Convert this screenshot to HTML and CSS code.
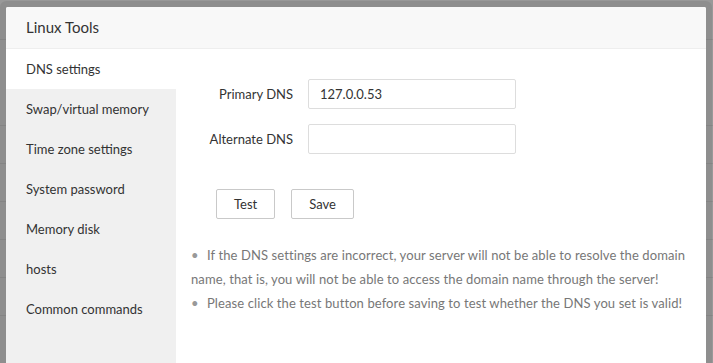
FILE: index.html
```html
<!DOCTYPE html>
<html lang="en">
<head>
    <meta charset="UTF-8">
    <title>Linux Tools</title>
    <link rel="stylesheet" href="styles.css">
</head>
<body>
    <!-- page behind the dimmed overlay -->
    <div class="page">
        <div class="page-row row-head"></div>
        <div class="page-row row-tall"></div>
        <div class="page-row"></div>
        <div class="page-row"></div>
        <div class="page-row"></div>
        <div class="page-row"></div>
        <div class="page-row"></div>
    </div>

    <!-- Modal -->
    <div class="layer">
        <div class="layer-title">Linux Tools</div>
        <div class="layer-body">
            <ul class="tabs">
                <li class="tab active">DNS settings</li>
                <li class="tab">Swap/virtual memory</li>
                <li class="tab">Time zone settings</li>
                <li class="tab">System password</li>
                <li class="tab">Memory disk</li>
                <li class="tab">hosts</li>
                <li class="tab">Common commands</li>
            </ul>
            <div class="tab-content">
                <div class="form-item">
                    <label class="form-label" for="dns1">Primary DNS</label>
                    <input class="form-input" type="text" id="dns1" value="127.0.0.53">
                </div>
                <div class="form-item">
                    <label class="form-label" for="dns2">Alternate DNS</label>
                    <input class="form-input" type="text" id="dns2">
                </div>
                <div class="form-buttons">
                    <button class="btn">Test</button>
                    <button class="btn">Save</button>
                </div>
                <ul class="help">
                    <li>If the DNS settings are incorrect, your server will not be able to resolve the domain name, that is, you will not be able to access the domain name through the server!</li>
                    <li>Please click the test button before saving to test whether the DNS you set is valid!</li>
                </ul>
            </div>
        </div>
    </div>
</body>
</html>
```

FILE: styles.css
```css
body {
    margin: 0;
    height: 363px;
    overflow: hidden;
    background-color: #999;
    font-family: Lato, "Liberation Sans", sans-serif;
    font-size: 13px;
    color: #333;
}
/* Background page */
.page-row {
    height: 37px;
    border-bottom: 1px solid #8e8e8e;
}
.row-head {
    height: 39px;
}
.row-tall {
    height: 85px;
}
/* Modal layer */
.layer {
    position: absolute;
    left: 6px;
    top: 7px;
    width: 700px;
    height: 362px;
    background-color: #fff;
    border-radius: 2px;
    box-shadow: 0 0 0 6px rgba(0, 0, 0, 0.07);
    display: flex;
    flex-direction: column;
}
.layer-title {
    height: 41px;
    line-height: 41px;
    padding: 0 20px;
    font-size: 15px;
    color: #333;
    background-color: #f8f8f8;
    border-bottom: 1px solid #eee;
    border-radius: 2px 2px 0 0;
}
.layer-body {
    flex: 1;
    display: flex;
}
.tabs {
    width: 170px;
    margin: 0;
    padding: 0;
    list-style: none;
    background-color: #f0f0f0;
}
.tab {
    height: 40px;
    line-height: 40px;
    padding-left: 20px;
}
.tab.active {
    background-color: #fff;
}
.tab-content {
    flex: 1;
    padding: 30px 20px 0 0;
}
.form-item {
    display: flex;
    align-items: center;
    margin-bottom: 15px;
}
.form-label {
    width: 117px;
    padding-right: 15px;
    text-align: right;
}
.form-input {
    width: 208px;
    height: 30px;
    box-sizing: border-box;
    padding: 0 11px;
    border: 1px solid #ddd;
    border-radius: 2px;
    font-family: inherit;
    font-size: 13px;
    color: #333;
    outline: none;
}
.form-buttons {
    display: flex;
    gap: 16px;
    padding: 20px 0 0 40px;
}
.btn {
    height: 30px;
    padding: 0 17px;
    background-color: #fff;
    border: 1px solid #c9c9c9;
    border-radius: 2px;
    font-family: inherit;
    font-size: 13px;
    color: #333;
}
.help {
    margin: 24px 0 0;
    padding: 0 0 0 15px;
    list-style: none;
    color: #777;
    line-height: 24px;
    letter-spacing: 0.1px;
}
.help li::before {
    content: "\2022";
    display: inline-block;
    width: 16px;
    color: #999;
}
```
